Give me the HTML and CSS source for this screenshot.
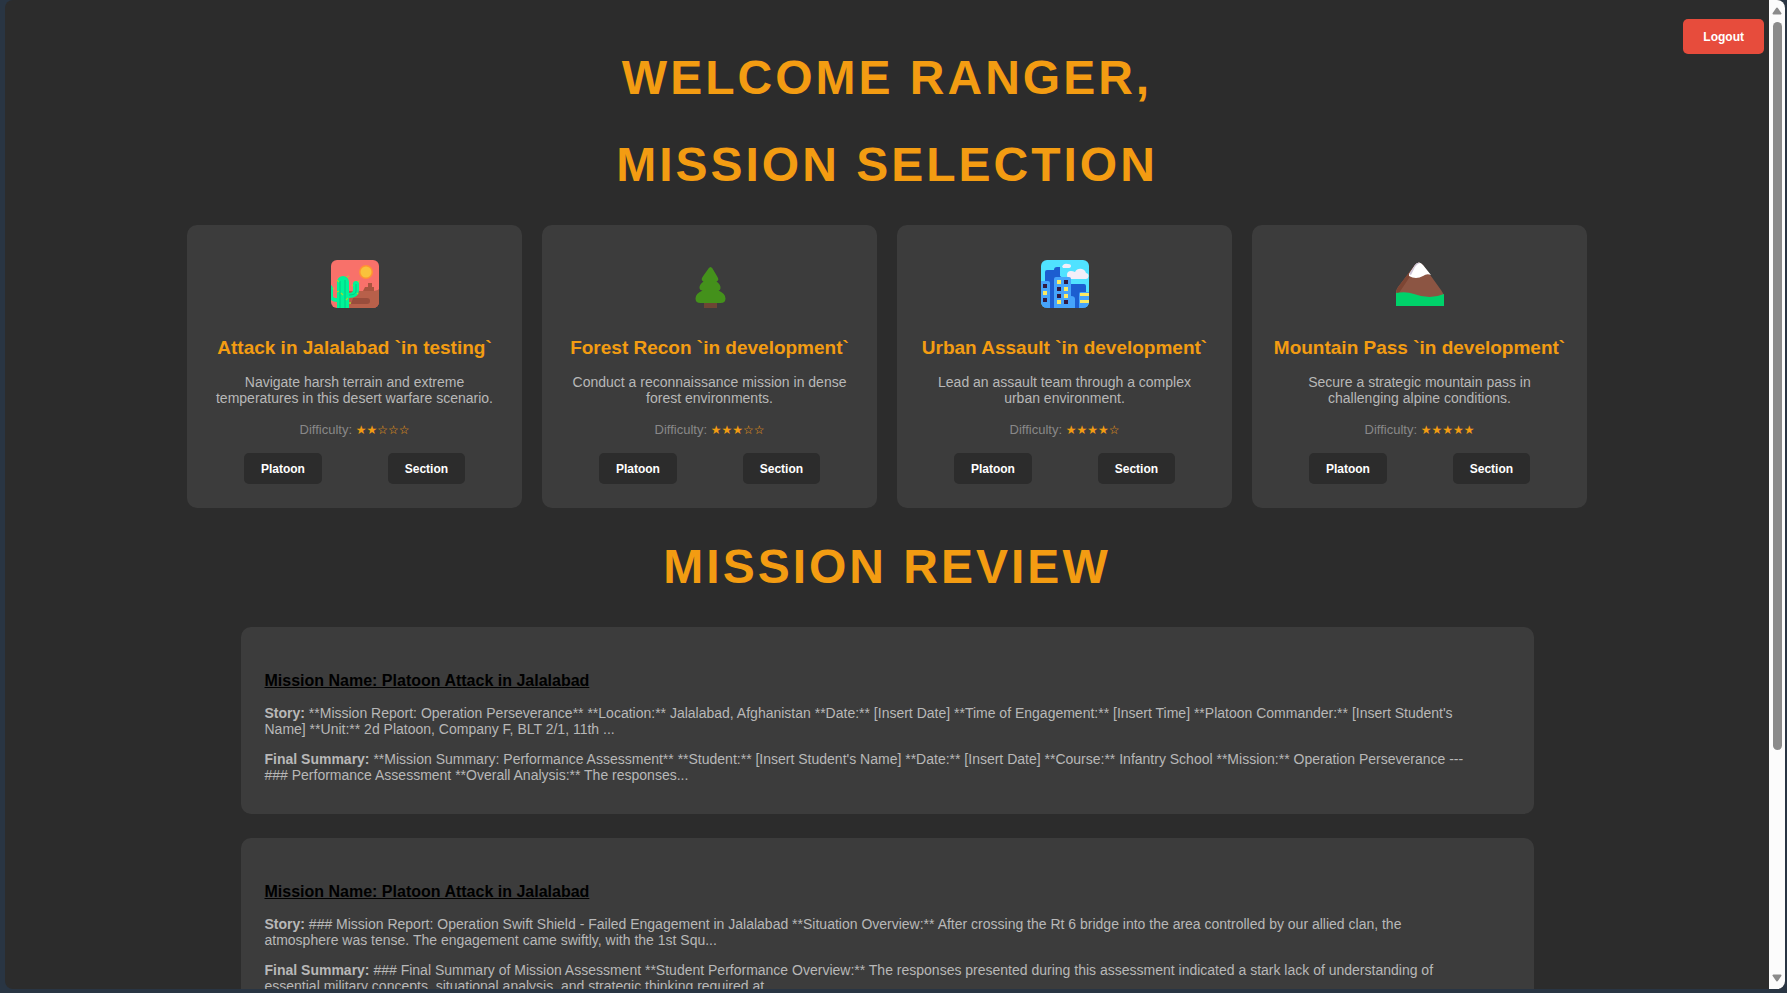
FILE: index.html
```
<!DOCTYPE html>
<html lang="en">
<head>
<meta charset="utf-8">
<title>Mission Selection</title>
<link rel="stylesheet" href="styles.css">
</head>
<body>
<div class="window">
  <div class="page">
    <button class="logout" type="button">Logout</button>
    <h1>WELCOME RANGER,</h1>
    <h1>MISSION SELECTION</h1>
    <main>
      <section class="missions">
        <article class="mission">
          <svg class="icon" viewBox="0 0 48 48" aria-hidden="true">
            <clipPath id="desert"><rect width="48" height="48" rx="6"/></clipPath>
            <g clip-path="url(#desert)">
              <rect width="48" height="48" fill="#f8716a"/>
              <path d="M18 48V31h14l2-4h3v-4h4v4h2v5h5v16z" fill="#a8543f"/>
              <path d="M30 31h10q6 0 8-2v19H18V31z" fill="#b8604a"/>
              <path d="M22 38h14a3 3 0 0 1 0 6H20z" fill="#994d3c"/>
              <circle cx="35" cy="12" r="7" fill="#ff9234"/>
              <circle cx="35" cy="12" r="5.5" fill="#f9c23c"/>
              <path d="M0 25q2 1 2 5v6q0 2 4 2V22a6 6 0 0 1 12 0v11q4 0 4-3v-6a3 3 0 0 1 6 0v6q0 8-10 8v10H6v-6q-4 0-6-2z" fill="#00f397"/>
              <path d="M9 21v27M14 20v28M25 24v7q0 4-7 4" stroke="#00c984" fill="none"/>
              <path d="M6 20l2 2M16 17l2-1M6 32l2-1M10 33l2 2M15 40l2-2M18 43h2M21 25l1 1M27 22l1-1M26 33l1 1M2 28l1 1" stroke="#a6d82c" stroke-width="1.3"/>
            </g>
          </svg>
          <h2>Attack in Jalalabad `in testing`</h2>
          <p class="desc">Navigate harsh terrain and extreme temperatures in this desert warfare scenario.</p>
          <p class="difficulty">Difficulty: <span class="stars">★★☆☆☆</span></p>
          <div class="actions"><button type="button">Platoon</button><button type="button">Section</button></div>
        </article>
        <article class="mission">
          <svg class="icon" viewBox="0 0 48 48" aria-hidden="true">
            <path d="M18 41h13v7H18z" fill="#6d4534"/>
            <path d="M22.500 8.500q2-3 4 0l5 8.500q2 3.500-1 4.500 4 3 4 6t-2 3q7 3 7 8 0 4.500-5 4.500h-20q-5 0-5-4.500 0-5 7-8-3 0-3-3t4-6q-3-1-1-4.500z" fill="#44911b"/>
          </svg>
          <h2>Forest Recon `in development`</h2>
          <p class="desc">Conduct a reconnaissance mission in dense forest environments.</p>
          <p class="difficulty">Difficulty: <span class="stars">★★★☆☆</span></p>
          <div class="actions"><button type="button">Platoon</button><button type="button">Section</button></div>
        </article>
        <article class="mission">
          <svg class="icon" viewBox="0 0 48 48" aria-hidden="true">
            <clipPath id="city"><rect width="48" height="48" rx="6"/></clipPath>
            <g clip-path="url(#city)">
              <rect width="48" height="48" fill="#50e2ff"/>
              <path d="M30 19a4 4 0 0 1 0-8q2 0 4 1a6 6 0 0 1 11 1 3 3 0 0 1-1 6zM22 8a2 2 0 0 1 0-3q2-2 5-1 3 0 3 2t-3 2z" fill="#f3eef8"/>
              <path d="M4 48V12q0-2 2-2h7q0-3 3-3h3v9l11 8h13q2 0 2 2v22z" fill="#1c5dd0"/>
              <path d="M0 21h7q2 0 2 2v22h4V19q0-2 2-2h13q2 0 2 2v17q4 0 4 3v9H0zM38 48V34q0-2 2-2h8v16z" fill="#46a4fb"/>
              <path d="M9 45h4v3H9z" fill="#1c5dd0"/>
              <path d="M39 33h9v3h-9zM39 40h9v3h-9zM16 20h4v4h-4zM23 27h4v4h-4zM23 34h4v4h-4zM16 40h4v4h-4zM2 31h4v4H2z" fill="#fcea63"/>
              <path d="M23 20h4v4h-4zM16 27h4v4h-4zM16 34h4v4h-4zM23 40h4v4h-4zM2 24h4v4H2zM2 38h4v4H2z" fill="#321b41"/>
            </g>
          </svg>
          <h2>Urban Assault `in development`</h2>
          <p class="desc">Lead an assault team through a complex urban environment.</p>
          <p class="difficulty">Difficulty: <span class="stars">★★★★☆</span></p>
          <div class="actions"><button type="button">Platoon</button><button type="button">Section</button></div>
        </article>
        <article class="mission">
          <svg class="icon" viewBox="0 0 48 48" aria-hidden="true">
            <path d="M0 46V32q0-2 2-5l17-22q4-5 8 0l18 25q3 4 3 7v9z" fill="#8c5543"/>
            <path d="M1 34q-1-5 2-8L18 6l4-3-7 12L3 33z" fill="#7d4533"/>
            <path d="M13 14l6-9q4-5 8 0l8 10q-4-2-8 1-7 4-14 0z" fill="#fff"/>
            <path d="M13 14l6-9q2-3 5-2-3 1-5 4l-4 8z" fill="#cdc4d6"/>
            <path d="M0 33q10-2 18 1 16 6 30 0v12H0z" fill="#00d26a"/>
          </svg>
          <h2>Mountain Pass `in development`</h2>
          <p class="desc">Secure a strategic mountain pass in challenging alpine conditions.</p>
          <p class="difficulty">Difficulty: <span class="stars">★★★★★</span></p>
          <div class="actions"><button type="button">Platoon</button><button type="button">Section</button></div>
        </article>
      </section>
      <h1>MISSION REVIEW</h1>
      <section class="reviews">
        <article class="review">
          <h3><a href="#review-1">Mission Name: Platoon Attack in Jalalabad</a></h3>
          <p><strong>Story:</strong> **Mission Report: Operation Perseverance** **Location:** Jalalabad, Afghanistan **Date:** [Insert Date] **Time of Engagement:** [Insert Time] **Platoon Commander:** [Insert Student's Name] **Unit:** 2d Platoon, Company F, BLT 2/1, 11th ...</p>
          <p><strong>Final Summary:</strong> **Mission Summary: Performance Assessment** **Student:** [Insert Student's Name] **Date:** [Insert Date] **Course:** Infantry School **Mission:** Operation Perseverance --- ### Performance Assessment **Overall Analysis:** The responses...</p>
        </article>
        <article class="review">
          <h3><a href="#review-2">Mission Name: Platoon Attack in Jalalabad</a></h3>
          <p><strong>Story:</strong> ### Mission Report: Operation Swift Shield - Failed Engagement in Jalalabad **Situation Overview:** After crossing the Rt 6 bridge into the area controlled by our allied clan, the atmosphere was tense. The engagement came swiftly, with the 1st Squ...</p>
          <p><strong>Final Summary:</strong> ### Final Summary of Mission Assessment **Student Performance Overview:** The responses presented during this assessment indicated a stark lack of understanding of essential military concepts, situational analysis, and strategic thinking required at...</p>
        </article>
      </section>
    </main>
  </div>
  <div class="scrollbar" aria-hidden="true">
    <svg class="arrow" viewBox="0 0 10 8"><path d="M5 1.500L8.500 6.500H1.500z"/></svg>
    <div class="track"><div class="thumb"></div></div>
    <svg class="arrow" viewBox="0 0 10 8"><path d="M5 6.500L1.500 1.500H8.500z"/></svg>
  </div>
</div>
</body>
</html>
```
FILE: styles.css
```
* {
  box-sizing: border-box;
}

body {
  margin: 0;
  height: 100vh;
  padding: 0 2px 4px 5px;
  overflow: hidden;
  background: #293543;
  font-family: Arial, "Liberation Sans", "DejaVu Sans", sans-serif;
}

.window {
  display: flex;
  height: 100%;
  overflow: hidden;
  border-radius: 8px;
  background: #2c2c2c;
}

.page {
  position: relative;
  flex: 1;
  min-width: 0;
  overflow: hidden;
  padding: 19px 20px 0;
  color: #b8b8b8;
}

.logout {
  position: absolute;
  top: 19px;
  right: 5px;
  padding: 11px 20px 9px;
  border: 0;
  border-radius: 5px;
  background: #e74c3c;
  color: #fff;
  font: bold 12px/15px "Liberation Sans", sans-serif;
}

h1 {
  margin: 32px 0 33px;
  color: #f39c12;
  font-size: 48px;
  line-height: 54px;
  letter-spacing: 3px;
  text-align: center;
}

.missions {
  display: grid;
  grid-template-columns: repeat(4, 1fr);
  gap: 20px;
  max-width: 1400px;
  margin: 0 auto;
}

.mission {
  padding: 24px 20px;
  border-radius: 10px;
  background: #3c3c3c;
  text-align: center;
}

.icon {
  display: block;
  width: 48px;
  height: 48px;
  margin: 11px auto 28px;
}

h2 {
  margin: 0 0 15px;
  color: #f39c12;
  font-size: 19px;
  line-height: 23px;
}

.desc {
  margin: 0 0 16px;
  padding: 0 4px;
  font-size: 14px;
  line-height: 16px;
}

.difficulty {
  margin: 0 0 16px;
  color: #888;
  font-size: 13px;
  line-height: 15px;
}

.stars {
  color: #f39c12;
  font: bold 12px/12px "DejaVu Sans", sans-serif;
}

.actions {
  display: flex;
  justify-content: space-around;
  padding: 0 4px;
}

.actions button {
  padding: 9px 17px 7px;
  border: 0;
  border-radius: 5px;
  background: #2c2c2c;
  color: #fff;
  font: bold 12px/15px "Liberation Sans", sans-serif;
}

.reviews {
  display: flex;
  flex-direction: column;
  gap: 24px;
  max-width: 1293px;
  margin: 0 auto;
}

.review {
  padding: 45px 24px 31px;
  border-radius: 10px;
  background: #3c3c3c;
}

h3 {
  margin: 0 0 15px;
  font-size: 16px;
  line-height: 18px;
}

h3 a {
  color: #000;
}

.review p {
  max-width: 1206px;
  margin: 0 0 14px;
  font-size: 14px;
  line-height: 16px;
}

.review p:last-child {
  margin-bottom: 0;
}

.scrollbar {
  display: flex;
  flex-direction: column;
  align-items: center;
  width: 16px;
  padding: 7px 0;
  background: #fcfcfc;
}

.arrow {
  width: 10px;
  height: 8px;
  fill: #8b8b8b;
  stroke: #8b8b8b;
  stroke-width: 2;
  stroke-linejoin: round;
}

.track {
  flex: 1;
  width: 9px;
  margin: 7px 0;
}

.thumb {
  height: 77%;
  border-radius: 5px;
  background: #8b8b8b;
}
```
